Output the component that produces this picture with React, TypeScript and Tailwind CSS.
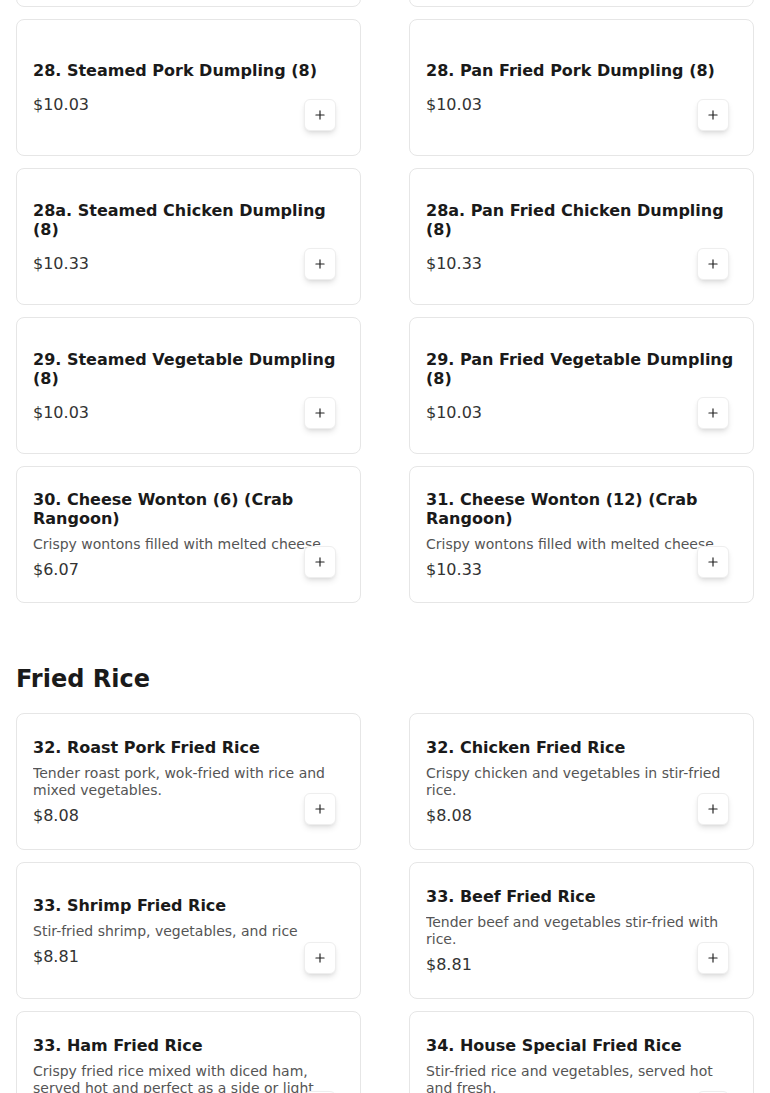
import { Plus } from "lucide-react";

interface MenuItem {
  name: string;
  price: string;
  desc?: string;
}

const dumplings: MenuItem[] = [
  { name: "27. Pan Fried Wonton (10)", price: "$9.50" },
  { name: "27. Steamed Wonton (10)", price: "$9.50" },
  { name: "28. Steamed Pork Dumpling (8)", price: "$10.03" },
  { name: "28. Pan Fried Pork Dumpling (8)", price: "$10.03" },
  { name: "28a. Steamed Chicken Dumpling (8)", price: "$10.33" },
  { name: "28a. Pan Fried Chicken Dumpling (8)", price: "$10.33" },
  { name: "29. Steamed Vegetable Dumpling (8)", price: "$10.03" },
  { name: "29. Pan Fried Vegetable Dumpling (8)", price: "$10.03" },
  {
    name: "30. Cheese Wonton (6) (Crab Rangoon)",
    price: "$6.07",
    desc: "Crispy wontons filled with melted cheese.",
  },
  {
    name: "31. Cheese Wonton (12) (Crab Rangoon)",
    price: "$10.33",
    desc: "Crispy wontons filled with melted cheese.",
  },
];

const friedRice: MenuItem[] = [
  {
    name: "32. Roast Pork Fried Rice",
    price: "$8.08",
    desc: "Tender roast pork, wok-fried with rice and mixed vegetables.",
  },
  {
    name: "32. Chicken Fried Rice",
    price: "$8.08",
    desc: "Crispy chicken and vegetables in stir-fried rice.",
  },
  {
    name: "33. Shrimp Fried Rice",
    price: "$8.81",
    desc: "Stir-fried shrimp, vegetables, and rice",
  },
  {
    name: "33. Beef Fried Rice",
    price: "$8.81",
    desc: "Tender beef and vegetables stir-fried with rice.",
  },
  {
    name: "33. Ham Fried Rice",
    price: "$8.81",
    desc: "Crispy fried rice mixed with diced ham, served hot and perfect as a side or light meal.",
  },
  {
    name: "34. House Special Fried Rice",
    price: "$9.54",
    desc: "Stir-fried rice and vegetables, served hot and fresh.",
  },
];

function ItemCard({ item }: { item: MenuItem }) {
  return (
    <div className="relative flex h-[137px] flex-col justify-center rounded-lg border border-[#e6e6e6] bg-white px-4">
      <h3 className="text-[16px] font-bold leading-[19px] text-[#1a1a1a]">{item.name}</h3>
      <p className="mt-2 line-clamp-2 text-[14px] leading-[17px] text-[#555]">{item.desc}</p>
      <p className="mt-[7px] text-[16px] leading-[19px] text-[#333]">{item.price}</p>
      {/* add-to-cart button sits over the card's bottom-right corner */}
      <button className="absolute bottom-6 right-6 flex h-8 w-8 items-center justify-center rounded-md border border-[#eeeeee] bg-white shadow-md">
        <Plus className="h-3.5 w-3.5 text-[#222]" strokeWidth={2} />
      </button>
    </div>
  );
}

export default function App() {
  return (
    <div className="h-[1093px] overflow-hidden bg-white font-['DejaVu_Sans',sans-serif]">
      <div className="-mt-[130px] px-4">
        <div className="grid grid-cols-2 gap-x-12 gap-y-3">
          {dumplings.map((item) => (
            <ItemCard key={item.name} item={item} />
          ))}
        </div>

        <h2 className="mb-[18px] mt-[60px] text-[24px] font-bold leading-[32px] text-[#1a1a1a]">Fried Rice</h2>

        <div className="grid grid-cols-2 gap-x-12 gap-y-3">
          {friedRice.map((item) => (
            <ItemCard key={item.name} item={item} />
          ))}
        </div>
      </div>
    </div>
  );
}
